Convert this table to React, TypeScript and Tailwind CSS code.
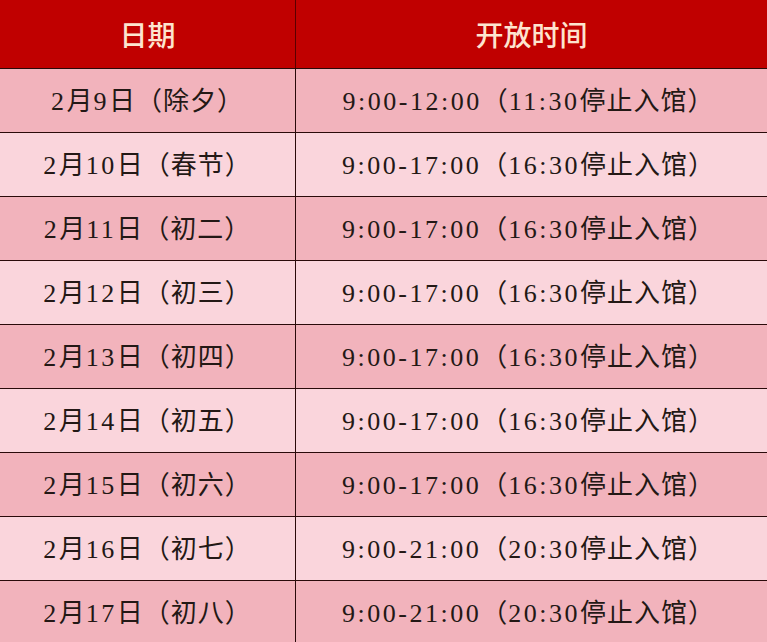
const rows = [
  { date: '2月9日（除夕）', time: '9:00-12:00（11:30停止入馆）' },
  { date: '2月10日（春节）', time: '9:00-17:00（16:30停止入馆）' },
  { date: '2月11日（初二）', time: '9:00-17:00（16:30停止入馆）' },
  { date: '2月12日（初三）', time: '9:00-17:00（16:30停止入馆）' },
  { date: '2月13日（初四）', time: '9:00-17:00（16:30停止入馆）' },
  { date: '2月14日（初五）', time: '9:00-17:00（16:30停止入馆）' },
  { date: '2月15日（初六）', time: '9:00-17:00（16:30停止入馆）' },
  { date: '2月16日（初七）', time: '9:00-21:00（20:30停止入馆）' },
  { date: '2月17日（初八）', time: '9:00-21:00（20:30停止入馆）' },
];

const cellFont = {
  fontFamily: '"Liberation Serif", "Noto Sans CJK SC", serif',
};

// digits in the source are wide, fixed-width glyphs: widen the ASCII runs
const Cell = ({ text }: { text: string }) => (
  <>
    {text.split(/([0-9:\-]+)/).map((part, i) =>
      /^[0-9:\-]+$/.test(part) ? (
        <span key={i} className="tracking-[2.5px]">
          {part}
        </span>
      ) : (
        <span key={i} className="tracking-[1px]">
          {part}
        </span>
      )
    )}
  </>
);

export default function App() {
  return (
    <div className="w-[767px] h-[642px] overflow-hidden bg-white">
      <div className="grid grid-cols-[296px_1fr] h-[68px] bg-[#c00000] text-[#fde4cf] text-[28px] font-medium font-['Noto_Sans_CJK_SC',sans-serif]">
        <div className="flex items-center justify-center border-r-[1.5px] border-[#5a0000]">日期</div>
        <div className="flex items-center justify-center">开放时间</div>
      </div>
      {rows.map((r, i) => (
        <div
          key={r.date}
          className={`grid grid-cols-[296px_1fr] h-[64px] border-t-[1.5px] border-[#2a0a0a] text-[26px] text-[#231815] ${
            i % 2 === 0 ? 'bg-[#f2b3bc]' : 'bg-[#fad5dc]'
          }`}
          style={cellFont}
        >
          <div className="flex items-center justify-center border-r-[1.5px] border-[#2a0a0a] pt-[1px]">
            <Cell text={r.date} />
          </div>
          <div className="flex items-center justify-center pr-[6px] pt-[1px]">
            <Cell text={r.time} />
          </div>
        </div>
      ))}
    </div>
  );
}
